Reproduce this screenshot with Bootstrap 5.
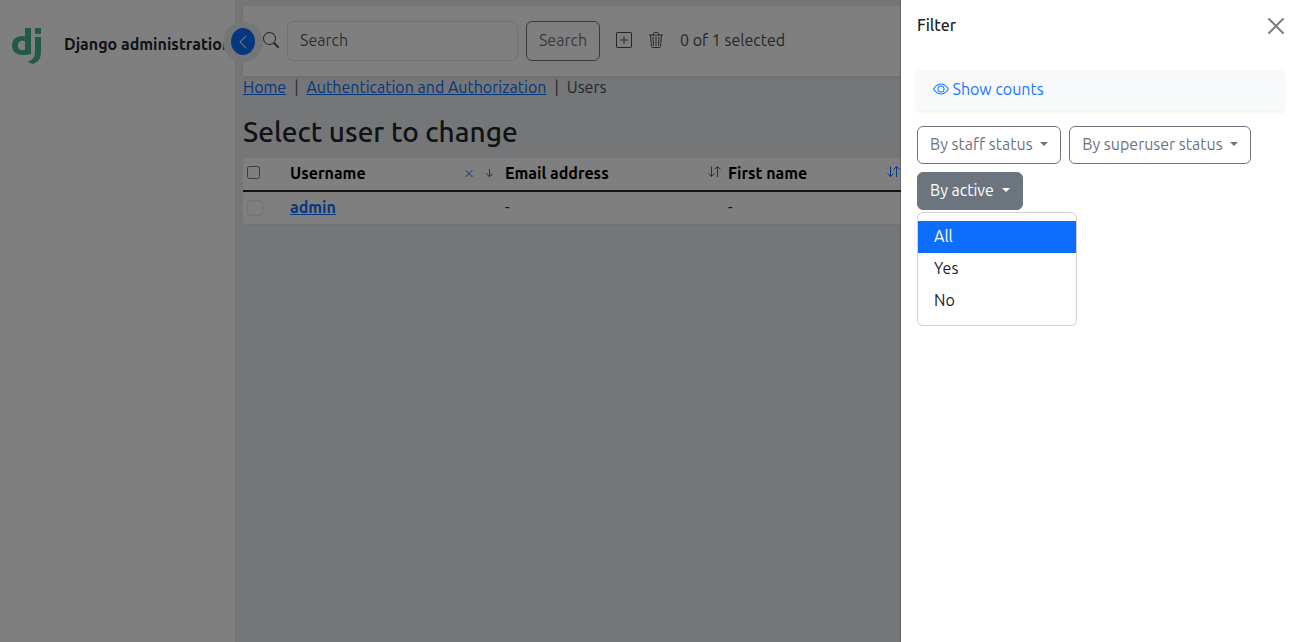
<!DOCTYPE html>
<html lang="en">
<head>
<meta charset="utf-8">
<title>Select user to change | Django administration</title>
<meta name="viewport" content="width=device-width, initial-scale=1">
<link href="https://cdn.jsdelivr.net/npm/bootstrap@5.3.0/dist/css/bootstrap.min.css" rel="stylesheet">
<style>
  body { font-family: Ubuntu, "Noto Sans", sans-serif; font-size: 16px; line-height: 24px; overflow: hidden; background: #e9ecef; }
  a { color: #0d6efd; }
  .side { width: 235px; box-shadow: 0 0 3px rgba(0,0,0,.08); }
  .brand-row { padding: 28px 0 0 12px; }
  .brand-name { font-weight: 600; margin: -5px 0 0 21px; }
  .toggle-ring { left: 223px; top: 22px; width: 40px; height: 40px; background: #e9ecef; z-index: 5; }
  .toggle-btn { width: 24px; height: 27px; margin-top: -1px; }
  .content { padding: 6px 0 0 8px; min-width: 0; }
  .toolbar { height: 70px; padding-left: 20px; }
  .toolbar svg { margin-top: -2px; }
  .toolbar-ink { color: #495057; }
  .selection-count { margin-bottom: 2px; }
  .search-box { width: 231px; height: 40px; margin-left: 8px; padding: 5px 12px 7px; }
  .search-btn { width: 74px; height: 40px; margin-left: 8px; padding: 5px 0 7px; }
  .crumbs { height: 24px; margin-top: -1px; }
  .page-title { font-size: 28px; line-height: 34px; font-weight: 500; height: 34px; margin: 16px 0 9px; }
  .users { width: 1052px; table-layout: fixed; }
  .users > :not(caption) > * > * { padding: 3px 4px 5px; }
  .users th { font-weight: 600; }
  .users > thead > tr > th { border-bottom: 0; vertical-align: middle; }
  .users thead tr { border-bottom: 2px solid #212529; }
  .users input { display: block; }
  .users thead input { width: 13px; height: 13px; margin: -1px 0 0; }
  .users .form-check-input { border-color: #c6cacd; position: relative; top: 1px; }
  .sort-icon { margin: 0 -1px 2px 0; }
  .offcanvas.filter-panel { width: 400px; right: -5px; }
  .filter-panel .offcanvas-header { height: 51px; }
  .filter-panel .offcanvas-title { font-size: 16px; line-height: 19px; }
  .filter-panel .offcanvas-body { padding: 19px 16px; }
  .counts { height: 40px; background: #f8f9fa; padding: 0 16px 2px; margin-bottom: 16px; }
  .counts a { color: #1677ff; }
  .counts svg { margin-right: 3.500px; }
  .filter-panel .btn { height: 38px; padding: 5px 12px 7px; }
  .filter-panel .dropdown-menu { width: 160px; height: 114px; top: 40px; left: 0; }
  .filter-panel .dropdown-item { padding: 3px 16px 5px; }
</style>
</head>
<body>
<div class="d-flex vh-100">
  <aside class="side bg-white flex-shrink-0 overflow-hidden">
    <div class="brand-row d-flex align-items-center text-nowrap">
      <svg class="flex-shrink-0" width="31" height="37" viewBox="0 0 31 37" fill="#44b78b"><path d="M13 0h6v26c-3 .7-5.400 1-8 1C4 27 0 23.500 0 17.500S4 8 10 8q1.800 0 3 .4zM13 13.100q-1.200-.4-2.600-.4c-2.900 0-4.500 1.700-4.500 4.700s1.600 4.700 4.600 4.700q1.100 0 2.500-.2zM23 0h6v6h-6zM29 9v14.500c0 7-2.300 10.500-8.500 12.500l-5-2.300c5.800-2.200 7.500-4.300 7.500-10.500V9z"/></svg>
      <span class="brand-name">Django administration</span>
    </div>
  </aside>
  <div class="toggle-ring position-absolute rounded-circle d-flex align-items-center justify-content-center">
    <span class="toggle-btn rounded-circle bg-primary d-flex align-items-center justify-content-center">
      <svg width="16" height="16" viewBox="0 0 16 16" fill="#fff"><path d="M11.354 1.646a.5.5 0 0 1 0 .708L5.707 8l5.647 5.646a.5.5 0 0 1-.708.708l-6-6a.5.5 0 0 1 0-.708l6-6a.5.5 0 0 1 .708 0z"/></svg>
    </span>
  </div>
  <main class="content flex-grow-1 overflow-hidden">
    <div class="toolbar bg-white shadow-sm d-flex align-items-center">
      <svg class="toolbar-ink" width="16" height="16" viewBox="0 0 16 16" fill="currentColor"><path d="M11.742 10.344a6.500 6.500 0 1 0-1.397 1.398h-.001c.03.04.062.078.098.115l3.850 3.850a1 1 0 0 0 1.415-1.414l-3.850-3.850a1.007 1.007 0 0 0-.115-.1zM12 6.500a5.500 5.500 0 1 1-11 0 5.500 5.500 0 0 1 11 0z"/></svg>
      <input class="form-control search-box" type="search" placeholder="Search">
      <button class="btn btn-outline-secondary search-btn">Search</button>
      <svg class="toolbar-ink ms-3" width="16" height="16" viewBox="0 0 16 16" fill="currentColor"><path d="M14 1a1 1 0 0 1 1 1v12a1 1 0 0 1-1 1H2a1 1 0 0 1-1-1V2a1 1 0 0 1 1-1h12zM2 0a2 2 0 0 0-2 2v12a2 2 0 0 0 2 2h12a2 2 0 0 0 2-2V2a2 2 0 0 0-2-2H2z"/><path d="M8 4a.5.5 0 0 1 .5.5v3h3a.5.5 0 0 1 0 1h-3v3a.5.5 0 0 1-1 0v-3h-3a.5.5 0 0 1 0-1h3v-3A.5.5 0 0 1 8 4z"/></svg>
      <svg class="toolbar-ink ms-3" width="16" height="16" viewBox="0 0 16 16" fill="none" stroke="currentColor"><path d="M1.500 3h13M5.500 3V1.500a1 1 0 0 1 1-1h3a1 1 0 0 1 1 1V3M2.500 3l.9 11.100a1.500 1.500 0 0 0 1.500 1.400h6.200a1.500 1.500 0 0 0 1.500-1.400L13.500 3M5 5l.5 8.500M8 5v8.500M11 5l-.5 8.500" stroke-linecap="round"/></svg>
      <span class="selection-count toolbar-ink ms-3">0 of 1 selected</span>
    </div>
    <nav class="crumbs d-flex" aria-label="breadcrumb">
      <a href="#">Home</a><span class="toolbar-ink px-2">|</span><a href="#">Authentication and Authorization</a><span class="toolbar-ink px-2">|</span><span class="toolbar-ink">Users</span>
    </nav>
    <h1 class="page-title">Select user to change</h1>
    <table class="table table-sm users bg-white mb-0 align-middle">
      <colgroup><col style="width:43px"><col style="width:215px"><col style="width:223px"><col style="width:179px"><col></colgroup>
      <thead>
        <tr>
          <th><input type="checkbox" aria-label="Select all"></th>
          <th><div class="d-flex align-items-center justify-content-between text-black">Username
            <span class="d-flex gap-2 pe-1"><svg width="12" height="12" viewBox="0 0 12 12" stroke="#0d6efd" fill="none"><path d="M4.500 3l7 7M11.500 3l-7 7"/></svg><svg width="12" height="12" viewBox="0 0 12 12" stroke="#0d6efd" fill="none"><path d="M8.500 2v7.500M5.200 6.500l3.300 3.300 3.300-3.300"/></svg></span></div></th>
          <th><div class="d-flex align-items-center justify-content-between text-black">Email address
            <svg class="sort-icon" width="14" height="14" viewBox="0 0 14 14" stroke="#0d6efd" fill="none"><path d="M4.500 1.500v10M1.500 8.500l3 3 3-3M10.500 12V2M7.500 4.500l3-3 3 3"/></svg></div></th>
          <th><div class="d-flex align-items-center justify-content-between text-black">First name
            <svg class="sort-icon" width="14" height="14" viewBox="0 0 14 14" stroke="#0d6efd" fill="none"><path d="M4.500 1.500v10M1.500 8.500l3 3 3-3M10.500 12V2M7.500 4.500l3-3 3 3"/></svg></div></th>
          <th></th>
        </tr>
      </thead>
      <tbody>
        <tr><td><input class="form-check-input m-0" type="checkbox" disabled aria-label="Select admin"></td><th><a href="#">admin</a></th><td>-</td><td>-</td><td></td></tr>
      </tbody>
    </table>
  </main>
</div>

<div class="offcanvas-backdrop show"></div>
<div class="offcanvas offcanvas-end show filter-panel" tabindex="-1" data-bs-backdrop="false" data-bs-scroll="true">
  <div class="offcanvas-header">
    <h5 class="offcanvas-title">Filter</h5>
    <button type="button" class="btn-close" aria-label="Close"></button>
  </div>
  <div class="offcanvas-body overflow-hidden">
    <div class="counts shadow-sm d-flex align-items-center">
      <a class="text-decoration-none d-flex align-items-center" href="#"><svg width="16" height="16" viewBox="0 0 16 16" fill="currentColor"><path d="M16 8s-3-5.500-8-5.500S0 8 0 8s3 5.500 8 5.500S16 8 16 8zM1.173 8a13.133 13.133 0 0 1 1.660-2.043C4.120 4.668 5.880 3.500 8 3.500c2.120 0 3.879 1.168 5.168 2.457A13.133 13.133 0 0 1 14.828 8c-.058.087-.122.183-.195.288-.335.480-.830 1.120-1.465 1.755C11.879 11.332 10.119 12.500 8 12.500c-2.120 0-3.879-1.168-5.168-2.457A13.134 13.134 0 0 1 1.172 8z"/><path d="M8 5.500a2.500 2.500 0 1 0 0 5 2.500 2.500 0 0 0 0-5zM4.500 8a3.500 3.500 0 1 1 7 0 3.500 3.500 0 0 1-7 0z"/></svg><span>Show counts</span></a>
    </div>
    <div class="d-flex flex-wrap gap-2">
      <button class="btn btn-outline-secondary dropdown-toggle">By staff status </button>
      <button class="btn btn-outline-secondary dropdown-toggle">By superuser status </button>
      <div class="dropdown">
        <button class="btn btn-secondary dropdown-toggle">By active </button>
        <ul class="dropdown-menu show">
          <li><a class="dropdown-item active" href="#">All</a></li>
          <li><a class="dropdown-item" href="#">Yes</a></li>
          <li><a class="dropdown-item" href="#">No</a></li>
        </ul>
      </div>
    </div>
  </div>
</div>
<script src="https://cdn.jsdelivr.net/npm/bootstrap@5.3.0/dist/js/bootstrap.bundle.min.js"></script>
</body>
</html>
